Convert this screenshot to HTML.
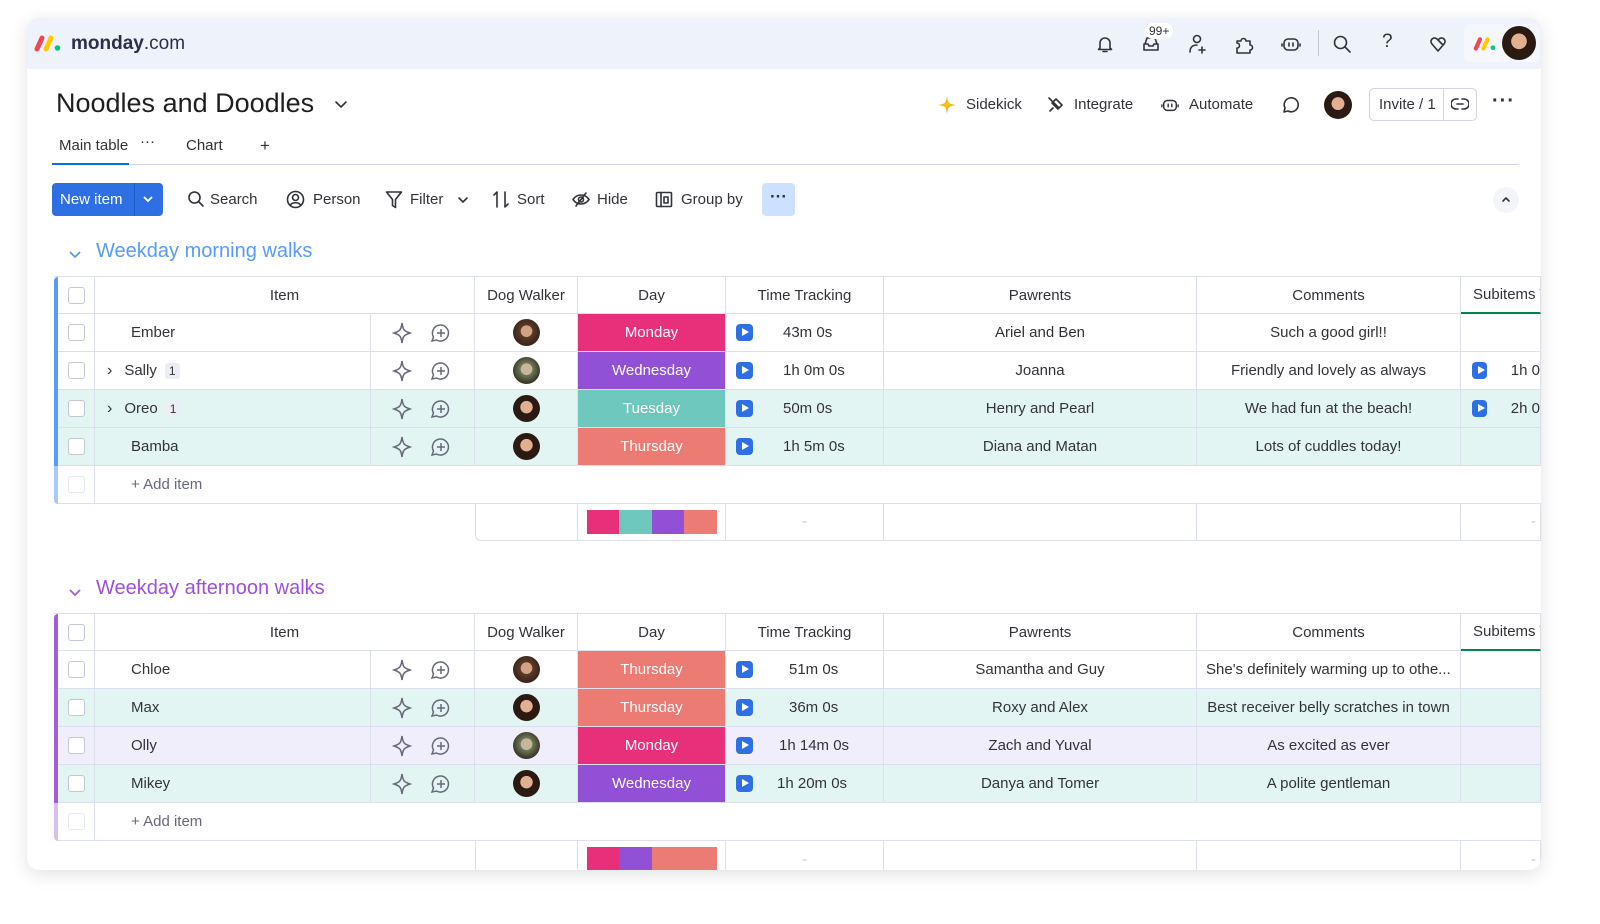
<!DOCTYPE html>
<html><head><meta charset="utf-8">
<style>
*{box-sizing:border-box;margin:0;padding:0}
body{width:1600px;height:924px;background:#fff;font-family:"Liberation Sans",sans-serif;color:#323338;position:relative;overflow:hidden}
.win{position:absolute;left:27px;top:18px;width:1514px;height:852px;border-radius:12px;overflow:hidden;background:#fff;box-shadow:0 4px 18px rgba(0,0,0,.12)}
.in{position:absolute;left:-27px;top:-18px;width:1600px;height:924px}
.a{position:absolute}
.top{left:0;top:0;width:1600px;height:69px;background:#eef2fb}
.ic{position:absolute;stroke:#323338;fill:none;stroke-width:1.6;stroke-linecap:round;stroke-linejoin:round}
.tb{font-size:15px;color:#323338;display:flex;align-items:center;gap:7px}
.row{position:absolute;left:54px;width:1487px;height:38px;display:grid;grid-template-columns:4px 37px 276px 104px 103px 148px 158px 313px 264px 80px;font-size:15px}
.row>div{border-right:1px solid #dcdfec;border-bottom:1px solid #dcdfec;display:flex;align-items:center;justify-content:center;white-space:nowrap;overflow:hidden}
.row>div.bar{border:none}
.cb{width:17px;height:17px;border:1px solid #c5c7d4;border-radius:3px;background:#fff}
.day{color:#fff}
.play{width:17px;height:17px;border-radius:4px;background:#2f6fe4;position:relative}
.play:after{content:"";position:absolute;left:6px;top:4px;border-left:7px solid #fff;border-top:4.5px solid transparent;border-bottom:4.5px solid transparent}
.av{width:27px;height:27px;border-radius:50%;background:radial-gradient(circle at 50% 45%,#e3b08f 0 30%,#2a1a12 32%)}
.av2{background:radial-gradient(circle at 50% 45%,#d4a283 0 28%,#5b3a2a 30%,#3a2418 70%)}
.av3{background:radial-gradient(circle at 50% 45%,#c9b59a 0 28%,#6c7a5a 30%,#3b3526 70%)}
.badge{display:inline-block;background:#ecedf5;border-radius:3px;font-size:12px;padding:1px 4px;margin-left:8px}
</style></head><body>
<div class="win"><div class="in">
<div class="a top"></div>
<!-- logo -->
<svg class="a" style="left:34px;top:34px" width="28" height="18" viewBox="0 0 28 18"><path d="M3 15 L8 4" stroke="#f0465c" stroke-width="5" stroke-linecap="round"/><path d="M12 15 L17 4" stroke="#ffcb00" stroke-width="5" stroke-linecap="round"/><circle cx="23.5" cy="14" r="2.8" fill="#00c875"/></svg>
<div class="a" style="left:71px;top:33px;font-size:19px;color:#292f4c"><b>monday</b>.com</div>
<!-- top icons -->
<svg class="ic" style="left:1095px;top:34px" width="20" height="20" viewBox="0 0 20 20"><path d="M5 14V9a5 5 0 0110 0v5l1.5 1.5h-13zM8 17.5h4"/></svg>
<svg class="ic" style="left:1141px;top:34px" width="20" height="20" viewBox="0 0 20 20"><path d="M3 10v6h14v-6M3 10h4l1 2h4l1-2h4M4 10l2-6h8l2 6"/></svg>
<div class="a" style="left:1145px;top:23px;background:#fff;border-radius:9px;font-size:12px;padding:1px 4px">99+</div>
<svg class="ic" style="left:1187px;top:33px" width="22" height="22" viewBox="0 0 22 22"><circle cx="10" cy="6" r="3.5"/><path d="M3 19c0-5 3-7 7-7M15 14v6M12 17h6"/></svg>
<svg class="ic" style="left:1233px;top:33px" width="22" height="22" viewBox="0 0 22 22"><path d="M4 8h4a2.5 2.5 0 115 0h4v4a2.5 2.5 0 010 5v3H4v-5a2.5 2.5 0 000-5z"/></svg>
<svg class="ic" style="left:1280px;top:34px" width="22" height="20" viewBox="0 0 22 20"><rect x="4" y="5" width="14" height="11" rx="4"/><path d="M9 9v3M13 9v3M2 10v2M20 10v2"/></svg>
<div class="a" style="left:1318px;top:30px;width:1px;height:26px;background:#c5c7d4"></div>
<svg class="ic" style="left:1332px;top:34px" width="20" height="20" viewBox="0 0 20 20"><circle cx="8.5" cy="8.5" r="6"/><path d="M13 13l5 5"/></svg>
<div class="a" style="left:1382px;top:31px;font-size:19px">?</div>
<svg class="ic" style="left:1428px;top:34px" width="20" height="20" viewBox="0 0 20 20"><path d="M10 17L4 10a3.5 3.5 0 015-5l6 6M10 17l6-7a3.5 3.5 0 00-5-5"/></svg>
<div class="a" style="left:1464px;top:24px;width:76px;height:38px;background:#f5f7fd;border-radius:6px"></div>
<svg class="a" style="left:1473px;top:36px" width="24" height="15" viewBox="0 0 28 18"><path d="M3 15 L8 4" stroke="#f0465c" stroke-width="5" stroke-linecap="round"/><path d="M12 15 L17 4" stroke="#ffcb00" stroke-width="5" stroke-linecap="round"/><circle cx="23.5" cy="14" r="2.8" fill="#00c875"/></svg>
<div class="a av" style="left:1502px;top:26px;width:34px;height:34px"></div>

<!-- title -->
<div class="a" style="left:56px;top:88px;font-size:27px;color:#1f1f1f">Noodles and Doodles</div>
<svg class="ic" style="left:334px;top:99px" width="14" height="10" viewBox="0 0 14 10"><path d="M2 3l5 5 5-5"/></svg>
<!-- right actions -->
<svg class="a" style="left:937px;top:95px" width="20" height="20" viewBox="0 0 20 20"><defs><linearGradient id="g" x1="0" y1="0" x2="1" y2="1"><stop offset="0" stop-color="#ff6b5b"/><stop offset=".5" stop-color="#ffcb00"/><stop offset="1" stop-color="#5b7bff"/></linearGradient></defs><path d="M10 1C11 8 12 9 19 10 12 11 11 12 10 19 9 12 8 11 1 10 8 9 9 8 10 1z" fill="url(#g)"/></svg>
<div class="a tb" style="left:966px;top:96px">Sidekick</div>
<svg class="ic" style="left:1046px;top:95px" width="20" height="20" viewBox="0 0 20 20"><path d="M6 8l6 6M7 7l3-3 6 6-3 3zM4 16l3-3M3 3l3 3"/></svg>
<div class="a tb" style="left:1074px;top:96px">Integrate</div>
<svg class="ic" style="left:1160px;top:96px" width="20" height="18" viewBox="0 0 22 20"><rect x="4" y="5" width="14" height="11" rx="4"/><path d="M9 9v3M13 9v3M2 10v2M20 10v2"/></svg>
<div class="a tb" style="left:1189px;top:96px">Automate</div>
<svg class="ic" style="left:1279px;top:94px" width="22" height="22" viewBox="0 0 22 22"><path d="M5 18l1-4a7 7 0 113 3z"/></svg>
<div class="a av" style="left:1324px;top:91px;width:28px;height:28px"></div>
<div class="a" style="left:1369px;top:88px;width:108px;height:33px;border:1px solid #d0d4e4;border-radius:5px"></div>
<div class="a" style="left:1443px;top:88px;width:1px;height:33px;background:#d0d4e4"></div>
<div class="a tb" style="left:1379px;top:96px">Invite / 1</div>
<svg class="ic" style="left:1451px;top:96px" width="18" height="16" viewBox="0 0 18 16"><path d="M7 3H5a5 5 0 000 10h2M11 3h2a5 5 0 010 10h-2M6 8h6"/></svg>
<div class="a" style="left:1492px;top:90px;font-size:20px;font-weight:bold;letter-spacing:1px">···</div>
<!-- tabs -->
<div class="a" style="left:59px;top:137px;font-size:15px">Main table</div>
<div class="a" style="left:140px;top:133px;font-size:15px">···</div>
<div class="a" style="left:186px;top:137px;font-size:15px">Chart</div>
<div class="a" style="left:260px;top:136px;font-size:17px">+</div>
<div class="a" style="left:52px;top:164px;width:1467px;height:1px;background:#d0d4e4"></div>
<div class="a" style="left:52px;top:163px;width:77px;height:2px;background:#0073ea"></div>
<!-- toolbar -->
<div class="a" style="left:52px;top:183px;width:111px;height:33px;background:#2f6fe4;border-radius:4px"></div>
<div class="a" style="left:134px;top:183px;width:1px;height:33px;background:#1f5bc4"></div>
<div class="a" style="left:60px;top:191px;color:#fff;font-size:15px">New item</div>
<svg class="a" style="left:142px;top:194px" width="12" height="10" viewBox="0 0 12 10"><path d="M2 3l4 4 4-4" stroke="#fff" stroke-width="1.8" fill="none"/></svg>
<svg class="ic" style="left:187px;top:190px" width="18" height="18" viewBox="0 0 18 18"><circle cx="7.5" cy="7.5" r="5.5"/><path d="M11.5 11.5l4.5 4.5"/></svg>
<div class="a tb" style="left:210px;top:191px">Search</div>
<svg class="ic" style="left:286px;top:190px" width="19" height="19" viewBox="0 0 19 19"><circle cx="9.5" cy="9.5" r="8"/><circle cx="9.5" cy="7.5" r="3"/><path d="M4.5 15c1.5-3 8.5-3 10 0"/></svg>
<div class="a tb" style="left:313px;top:191px">Person</div>
<svg class="ic" style="left:385px;top:190px" width="18" height="19" viewBox="0 0 18 19"><path d="M1.5 2h15l-6 7.5v8l-3-2v-6z"/></svg>
<div class="a tb" style="left:410px;top:191px">Filter</div>
<svg class="ic" style="left:457px;top:196px" width="12" height="8" viewBox="0 0 12 8"><path d="M2 2l4 4 4-4"/></svg>
<svg class="ic" style="left:492px;top:190px" width="18" height="19" viewBox="0 0 18 19"><path d="M5 17V2L2 5M13 2v15l3-3"/></svg>
<div class="a tb" style="left:517px;top:191px">Sort</div>
<svg class="ic" style="left:571px;top:191px" width="20" height="17" viewBox="0 0 20 17"><path d="M2 8.5c4-6 12-6 16 0-4 6-12 6-16 0z"/><circle cx="10" cy="8.5" r="2.5"/><path d="M15 2L5 15"/></svg>
<div class="a tb" style="left:597px;top:191px">Hide</div>
<svg class="ic" style="left:655px;top:191px" width="18" height="17" viewBox="0 0 18 17"><rect x="1.5" y="1.5" width="15" height="14" rx="1"/><path d="M6 1.5v14M9 6h4v6h-4z"/></svg>
<div class="a tb" style="left:681px;top:191px">Group by</div>
<div class="a" style="left:762px;top:183px;width:33px;height:33px;background:#cce1ff;border-radius:4px;text-align:center;font-size:17px;line-height:28px;color:#323338;font-weight:bold">···</div>
<div class="a" style="left:1493px;top:187px;width:26px;height:26px;border-radius:50%;background:#f3f5fb"></div>
<svg class="ic" style="left:1500px;top:195px" width="12" height="8" viewBox="0 0 12 8"><path d="M3 6l3-3 3 3"/></svg>

<!-- GROUP 1 -->
<svg class="a" style="left:68px;top:249px" width="14" height="10" viewBox="0 0 14 10"><path d="M2 3l5 5 5-5" stroke="#579bfc" stroke-width="1.8" fill="none"/></svg>
<div class="a" style="left:96px;top:240px;font-size:20px;color:#579bfc">Weekday morning walks</div>
<div class="a" style="left:54px;top:276px;width:1487px;height:1px;background:#dcdfec"></div>
<div class="row" style="top:277px;height:37px"><div class="bar" style="background:#579bfc;border-top-left-radius:6px"></div><div><span class="cb"></span></div><div style="grid-column:span 2">Item</div><div>Dog Walker</div><div>Day</div><div>Time Tracking</div><div>Pawrents</div><div>Comments</div><div style="justify-content:flex-start;padding-left:12px;border-bottom:2px solid #00854d">Subitems T</div></div>

<div class="row" style="top:314px"><div class="bar" style="background:#579bfc"></div><div><span class="cb"></span></div><div style="justify-content:flex-start;padding-left:36px">Ember</div><div><svg width="70" height="24" viewBox="0 0 70 24" fill="none" stroke="#676879" stroke-width="1.5"><path d="M14 2C15 9 16 10 22 12 16 14 15 15 14 22 13 15 12 14 6 12 12 10 13 9 14 2z"/><path d="M44 20l1.5-4a8 8 0 113 3zM53 8v8M49 12h8"/></svg></div><div><span class="av av2"></span></div><div class="day" style="background:#e8307a">Monday</div><div style="justify-content:flex-start;padding-left:10px"><span class="play"></span><span style="margin-left:30px">43m 0s</span></div><div>Ariel and Ben</div><div>Such a good girl!!</div><div></div></div>

<div class="row" style="top:352px"><div class="bar" style="background:#579bfc"></div><div><span class="cb"></span></div><div style="justify-content:flex-start;padding-left:12px"><span style="font-size:16px;margin-right:12px">›</span>Sally<span class="badge">1</span></div><div><svg width="70" height="24" viewBox="0 0 70 24" fill="none" stroke="#676879" stroke-width="1.5"><path d="M14 2C15 9 16 10 22 12 16 14 15 15 14 22 13 15 12 14 6 12 12 10 13 9 14 2z"/><path d="M44 20l1.5-4a8 8 0 113 3zM53 8v8M49 12h8"/></svg></div><div><span class="av av3"></span></div><div class="day" style="background:#9150d6">Wednesday</div><div style="justify-content:flex-start;padding-left:10px"><span class="play"></span><span style="margin-left:30px">1h 0m 0s</span></div><div>Joanna</div><div>Friendly and lovely as always</div><div style="justify-content:flex-start;padding-left:11px"><span class="play"></span><span style="margin-left:24px">1h 0</span></div></div>

<div class="row" style="top:390px;background:#e3f5f3"><div class="bar" style="background:#579bfc"></div><div><span class="cb"></span></div><div style="justify-content:flex-start;padding-left:12px"><span style="font-size:16px;margin-right:12px">›</span>Oreo<span class="badge">1</span></div><div><svg width="70" height="24" viewBox="0 0 70 24" fill="none" stroke="#676879" stroke-width="1.5"><path d="M14 2C15 9 16 10 22 12 16 14 15 15 14 22 13 15 12 14 6 12 12 10 13 9 14 2z"/><path d="M44 20l1.5-4a8 8 0 113 3zM53 8v8M49 12h8"/></svg></div><div><span class="av"></span></div><div class="day" style="background:#6fc8bd">Tuesday</div><div style="justify-content:flex-start;padding-left:10px"><span class="play"></span><span style="margin-left:30px">50m 0s</span></div><div>Henry and Pearl</div><div>We had fun at the beach!</div><div style="justify-content:flex-start;padding-left:11px"><span class="play"></span><span style="margin-left:24px">2h 0</span></div></div>

<div class="row" style="top:428px;background:#e3f5f3"><div class="bar" style="background:#579bfc"></div><div><span class="cb"></span></div><div style="justify-content:flex-start;padding-left:36px">Bamba</div><div><svg width="70" height="24" viewBox="0 0 70 24" fill="none" stroke="#676879" stroke-width="1.5"><path d="M14 2C15 9 16 10 22 12 16 14 15 15 14 22 13 15 12 14 6 12 12 10 13 9 14 2z"/><path d="M44 20l1.5-4a8 8 0 113 3zM53 8v8M49 12h8"/></svg></div><div><span class="av"></span></div><div class="day" style="background:#ec7b73">Thursday</div><div style="justify-content:flex-start;padding-left:10px"><span class="play"></span><span style="margin-left:30px">1h 5m 0s</span></div><div>Diana and Matan</div><div>Lots of cuddles today!</div><div></div></div>

<div class="row" style="top:466px;grid-template-columns:4px 37px 1446px"><div class="bar" style="background:#a9c8fd;border-bottom-left-radius:6px"></div><div><span class="cb" style="border-color:#e6e7ef"></span></div><div style="justify-content:flex-start;padding-left:36px;color:#676879;border-right:none">+ Add item</div></div>

<div class="row" style="top:503px;left:475px;width:1066px;grid-template-columns:103px 148px 158px 313px 264px 80px"><div style="border-left:1px solid #dcdfec;border-bottom-left-radius:6px"></div><div><span style="display:flex;width:130px;height:24px"><i style="flex:1;background:#e8307a"></i><i style="flex:1;background:#6fc8bd"></i><i style="flex:1;background:#9150d6"></i><i style="flex:1;background:#ec7b73"></i></span></div><div style="color:#c5c7d4">-</div><div></div><div></div><div style="justify-content:flex-end;padding-right:4px;color:#c5c7d4">-</div></div>

<!-- GROUP 2 -->
<svg class="a" style="left:68px;top:587px" width="14" height="10" viewBox="0 0 14 10"><path d="M2 3l5 5 5-5" stroke="#a25ddc" stroke-width="1.8" fill="none"/></svg>
<div class="a" style="left:96px;top:577px;font-size:20px;color:#9d50dd">Weekday afternoon walks</div>
<div class="a" style="left:54px;top:613px;width:1487px;height:1px;background:#dcdfec"></div>
<div class="row" style="top:614px;height:37px"><div class="bar" style="background:#a25ddc;border-top-left-radius:6px"></div><div><span class="cb"></span></div><div style="grid-column:span 2">Item</div><div>Dog Walker</div><div>Day</div><div>Time Tracking</div><div>Pawrents</div><div>Comments</div><div style="justify-content:flex-start;padding-left:12px;border-bottom:2px solid #00854d">Subitems T</div></div>

<div class="row" style="top:651px"><div class="bar" style="background:#a25ddc"></div><div><span class="cb"></span></div><div style="justify-content:flex-start;padding-left:36px">Chloe</div><div><svg width="70" height="24" viewBox="0 0 70 24" fill="none" stroke="#676879" stroke-width="1.5"><path d="M14 2C15 9 16 10 22 12 16 14 15 15 14 22 13 15 12 14 6 12 12 10 13 9 14 2z"/><path d="M44 20l1.5-4a8 8 0 113 3zM53 8v8M49 12h8"/></svg></div><div><span class="av av2"></span></div><div class="day" style="background:#ec7b73">Thursday</div><div style="justify-content:flex-start;padding-left:10px"><span class="play"></span><span style="margin-left:36px">51m 0s</span></div><div>Samantha and Guy</div><div style="justify-content:flex-start;padding-left:9px">She's definitely warming up to othe...</div><div></div></div>

<div class="row" style="top:689px;background:#e3f5f3"><div class="bar" style="background:#a25ddc"></div><div><span class="cb"></span></div><div style="justify-content:flex-start;padding-left:36px">Max</div><div><svg width="70" height="24" viewBox="0 0 70 24" fill="none" stroke="#676879" stroke-width="1.5"><path d="M14 2C15 9 16 10 22 12 16 14 15 15 14 22 13 15 12 14 6 12 12 10 13 9 14 2z"/><path d="M44 20l1.5-4a8 8 0 113 3zM53 8v8M49 12h8"/></svg></div><div><span class="av"></span></div><div class="day" style="background:#ec7b73">Thursday</div><div style="justify-content:flex-start;padding-left:10px"><span class="play"></span><span style="margin-left:36px">36m 0s</span></div><div>Roxy and Alex</div><div>Best receiver belly scratches in town</div><div></div></div>

<div class="row" style="top:727px;background:#f1eefc"><div class="bar" style="background:#a25ddc"></div><div><span class="cb"></span></div><div style="justify-content:flex-start;padding-left:36px">Olly</div><div><svg width="70" height="24" viewBox="0 0 70 24" fill="none" stroke="#676879" stroke-width="1.5"><path d="M14 2C15 9 16 10 22 12 16 14 15 15 14 22 13 15 12 14 6 12 12 10 13 9 14 2z"/><path d="M44 20l1.5-4a8 8 0 113 3zM53 8v8M49 12h8"/></svg></div><div><span class="av av3"></span></div><div class="day" style="background:#e8307a">Monday</div><div style="justify-content:flex-start;padding-left:10px"><span class="play"></span><span style="margin-left:26px">1h 14m 0s</span></div><div>Zach and Yuval</div><div>As excited as ever</div><div></div></div>

<div class="row" style="top:765px;background:#e3f5f3"><div class="bar" style="background:#a25ddc"></div><div><span class="cb"></span></div><div style="justify-content:flex-start;padding-left:36px">Mikey</div><div><svg width="70" height="24" viewBox="0 0 70 24" fill="none" stroke="#676879" stroke-width="1.5"><path d="M14 2C15 9 16 10 22 12 16 14 15 15 14 22 13 15 12 14 6 12 12 10 13 9 14 2z"/><path d="M44 20l1.5-4a8 8 0 113 3zM53 8v8M49 12h8"/></svg></div><div><span class="av"></span></div><div class="day" style="background:#9150d6">Wednesday</div><div style="justify-content:flex-start;padding-left:10px"><span class="play"></span><span style="margin-left:24px">1h 20m 0s</span></div><div>Danya and Tomer</div><div>A polite gentleman</div><div></div></div>

<div class="row" style="top:803px;grid-template-columns:4px 37px 1446px"><div class="bar" style="background:#d9bff2;border-bottom-left-radius:6px"></div><div><span class="cb" style="border-color:#e6e7ef"></span></div><div style="justify-content:flex-start;padding-left:36px;color:#676879;border-right:none">+ Add item</div></div>

<div class="row" style="top:841px;left:475px;width:1066px;grid-template-columns:103px 148px 158px 313px 264px 80px"><div style="border-left:1px solid #dcdfec"></div><div style="align-items:flex-start;padding-top:6px"><span style="display:flex;width:130px;height:24px"><i style="flex:1;background:#e8307a"></i><i style="flex:1;background:#9150d6"></i><i style="flex:2;background:#ec7b73"></i></span></div><div style="color:#c5c7d4">-</div><div></div><div></div><div style="justify-content:flex-end;padding-right:4px;color:#c5c7d4">-</div></div>
</div></div>
</body></html>
